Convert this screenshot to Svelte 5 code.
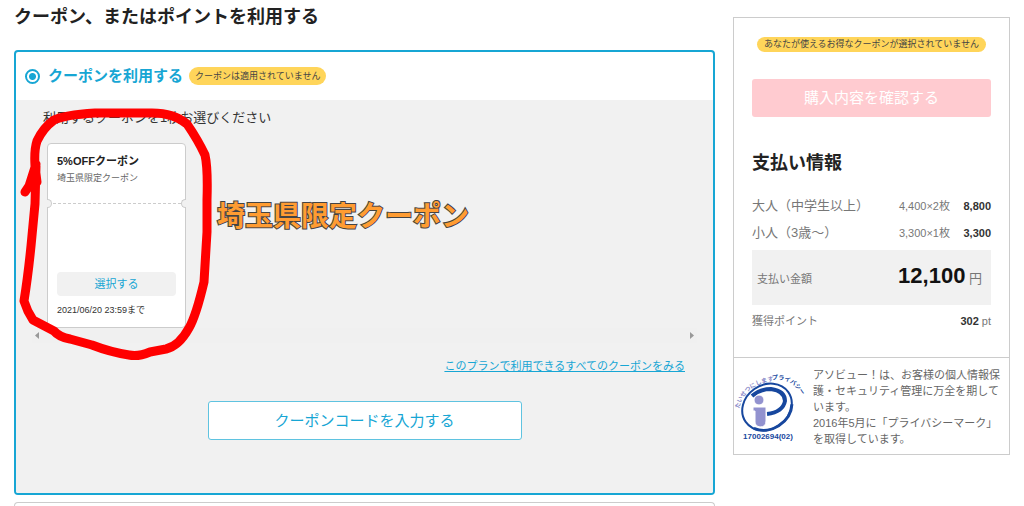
<script>
  let useCoupon = $state('coupon');

  const tickets = [
    { name: '大人（中学生以上）', count: '4,400×2枚', price: '8,800' },
    { name: '小人（3歳～）', count: '3,300×1枚', price: '3,300' }
  ];
</script>

<div class="page">
  <main>
    <h1>クーポン、またはポイントを利用する</h1>

    <section class="coupon_box">
      <div class="box_head">
        <label class="radio_label">
          <input type="radio" name="discount" value="coupon" bind:group={useCoupon} />
          <span>クーポンを利用する</span>
        </label>
        <span class="badge head_badge">クーポンは適用されていません</span>
      </div>

      <div class="box_body">
        <p class="lead">利用するクーポンを1枚お選びください</p>

        <div class="coupon_row">
          <article class="coupon">
            <div class="coupon_top">
              <h2>5%OFFクーポン</h2>
              <p>埼玉県限定クーポン</p>
            </div>
            <div class="coupon_cut"></div>
            <div class="coupon_bottom">
              <button class="select_btn" type="button">選択する</button>
              <p>2021/06/20 23:59まで</p>
            </div>
          </article>
          <strong class="callout">埼玉県限定クーポン</strong>

          <!-- 手書きの囲み -->
          <svg class="marker" width="200" height="256" viewBox="16 106 200 256" aria-hidden="true">
            <path d="M25 192 L29 186 L36 164 M37 182 L35 166 Q34 150 37 141 Q43 128 54 120 Q64 115 95 113 L120 113 L152 113 Q174 113 187 124 Q198 140 205 155 Q208 168 207 200 L207 232 L204 282 Q196 316 189 328 Q179 346 166 349 L150 352 Q138 357 129 355 Q110 352 92 345 L70 339 Q59 337 54 331 L33 320 Q27 311 24 301 Q28 276 31 246 L35 204 L36 166" />
          </svg>
        </div>

        <div class="scroll_bar" aria-hidden="true">
          <svg width="4" height="7" viewBox="0 0 4 7"><path d="M4 0V7L0 3.5Z" /></svg>
          <svg width="4" height="7" viewBox="0 0 4 7"><path d="M0 0V7L4 3.5Z" /></svg>
        </div>

        <a class="all_link" href="#coupons">このプランで利用できるすべてのクーポンをみる</a>
        <button class="code_btn" type="button">クーポンコードを入力する</button>
      </div>
    </section>

    <section class="next_box"></section>
  </main>

  <aside>
    <div class="pay">
      <span class="badge pay_badge">あなたが使えるお得なクーポンが選択されていません</span>
      <button class="confirm_btn" type="button" disabled>購入内容を確認する</button>

      <h2>支払い情報</h2>
      <table>
        <tbody>
          {#each tickets as ticket}
            <tr>
              <th>{ticket.name}</th>
              <td class="count">{ticket.count}</td>
              <td class="price">{ticket.price}</td>
            </tr>
          {/each}
        </tbody>
      </table>
      <div class="total">
        <span>支払い金額</span>
        <span class="yen"><b>12,100</b> 円</span>
      </div>
      <div class="point">
        <span>獲得ポイント</span>
        <span><b>302</b> pt</span>
      </div>
    </div>

    <div class="privacy">
      <svg width="68" height="70" viewBox="0 0 68 70" role="img" aria-label="プライバシーマーク">
        <defs>
          <path id="arc_left" d="M4 38 Q9 14 38 10" />
          <path id="arc_right" d="M37 9 Q58 6 69 28" />
        </defs>
        <text class="mark_soft"><textPath href="#arc_left">たいせつにします</textPath></text>
        <text class="mark_bold"><textPath href="#arc_right">プライバシー</textPath></text>
        <g transform="rotate(-35 32 36)">
          <ellipse cx="32" cy="36" rx="26" ry="22" fill="none" stroke="#17479e" stroke-width="2" />
          <path d="M9 46 A26 22 0 0 0 54 48" fill="none" stroke="#17479e" stroke-width="3" />
        </g>
        <path d="M17 25 Q25 18 36 18 Q50 20 50 30 Q48 41 32 43" fill="none" stroke="#17479e" stroke-width="4" />
        <circle cx="24" cy="29" r="5" fill="#9292cf" stroke="#fff" stroke-width="1" />
        <path d="M18 36 H31 V50 Q31 56 25 56 Q20 55 20 51 V40 H18Z" fill="#9292cf" stroke="#fff" stroke-width="1" />
        <text class="mark_no" x="33" y="68">17002694(02)</text>
      </svg>
      <p>アソビュー！は、お客様の個人情報保護・セキュリティ管理に万全を期しています。<br />2016年5月に「プライバシーマーク」を取得しています。</p>
    </div>
  </aside>
</div>

<style>
  :global(body) {
    margin: 0;
    background: #fff;
  }
  .page {
    display: grid;
    grid-template-columns: minmax(0, 1fr) 277px;
    align-items: start;
    gap: 18px;
    padding: 0 14px;
    color: #333;
    font-family: "Liberation Sans", "Noto Sans CJK JP", sans-serif;
  }
  h1, h2, p {
    margin: 0;
  }
  button {
    font-family: inherit;
    padding: 0;
    cursor: pointer;
  }
  h1 {
    padding: 3px 0 19px;
    font-size: 18px;
    line-height: 28px;
    color: #222;
  }
  .coupon_box {
    border: 2px solid #17a6d4;
    border-radius: 4px;
    overflow: hidden;
  }
  .box_head {
    display: flex;
    align-items: center;
    gap: 6px;
    padding: 12px 9px;
  }
  .radio_label {
    display: flex;
    align-items: center;
    gap: 8px;
    color: #17a6d4;
    font-size: 15px;
    font-weight: bold;
    line-height: 24px;
  }
  input {
    appearance: none;
    width: 15px;
    height: 15px;
    margin: 0;
    border: 2px solid #17a6d4;
    border-radius: 50%;
  }
  input:checked {
    background: radial-gradient(#17a6d4 0 3px, #fff 4px);
  }
  .badge {
    border-radius: 10px;
    background: #ffd55a;
    color: #444;
    font-size: 9px;
    text-align: center;
    white-space: nowrap;
  }
  .head_badge {
    padding: 0 6px;
    line-height: 18px;
  }
  .box_body {
    display: flex;
    flex-direction: column;
    padding: 0 16px 53px;
    background: #f1f1f1;
  }
  .lead {
    padding: 8px 0 15px 11px;
    font-size: 13px;
    line-height: 20px;
  }
  .coupon_row {
    position: relative;
    display: flex;
    align-items: flex-start;
    gap: 31px;
    padding-left: 15px;
  }
  .coupon {
    box-sizing: border-box;
    width: 139px;
    border: 1px solid #ccc;
    border-radius: 4px;
    background: #fff;
  }
  .coupon_top {
    padding: 8px 9px 13px;
  }
  .coupon h2 {
    color: #222;
    font-size: 11px;
    line-height: 18px;
  }
  .coupon_top p {
    color: #666;
    font-size: 9px;
    line-height: 16px;
  }
  .coupon_cut {
    position: relative;
    height: 9px;
    background: linear-gradient(90deg, #ccc 3px, transparent 3px) 5px 4px / 5px 1px repeat-x;
  }
  .coupon_cut::before,
  .coupon_cut::after {
    content: "";
    position: absolute;
    top: 0;
    box-sizing: border-box;
    width: 5px;
    height: 9px;
    border: 1px solid #ccc;
    background: #f1f1f1;
  }
  .coupon_cut::before {
    left: -1px;
    border-left: 0;
    border-radius: 0 5px 5px 0;
  }
  .coupon_cut::after {
    right: -1px;
    border-right: 0;
    border-radius: 5px 0 0 5px;
  }
  .coupon_bottom {
    padding: 64px 9px 9px;
  }
  .select_btn {
    display: block;
    width: 100%;
    border: 0;
    border-radius: 4px;
    background: #f1f1f1;
    color: #17a6d4;
    font-size: 11px;
    line-height: 24px;
  }
  .coupon_bottom p {
    padding-top: 6px;
    font-size: 9px;
    line-height: 16px;
    white-space: nowrap;
  }
  .callout {
    padding-top: 56px;
    color: #ff9c32;
    font-size: 28px;
    line-height: 36px;
    -webkit-text-stroke: 2px #444;
    paint-order: stroke fill;
    white-space: nowrap;
  }
  /* the scribble lies over the card and the lead text */
  .marker {
    position: absolute;
    left: -16px;
    top: -37px;
    pointer-events: none;
  }
  .marker path {
    fill: none;
    stroke: #f00;
    stroke-width: 9;
    stroke-linecap: round;
    stroke-linejoin: round;
  }
  .scroll_bar {
    display: flex;
    justify-content: space-between;
    align-items: center;
    height: 15px;
    padding: 0 3px;
    background: #f0f0f0;
  }
  .scroll_bar path {
    fill: #999;
  }
  .all_link {
    align-self: flex-end;
    margin: 15px 12px 0 0;
    color: #17a6d4;
    font-size: 11px;
    line-height: 16px;
  }
  .code_btn {
    align-self: center;
    width: 314px;
    margin-top: 27px;
    border: 1px solid #5fc3e0;
    border-radius: 3px;
    background: #fff;
    color: #17a6d4;
    font-size: 15px;
    line-height: 37px;
  }
  .next_box {
    height: 3px;
    margin-top: 7px;
    border: 1px solid #ccc;
    border-bottom: 0;
    border-radius: 4px 4px 0 0;
  }
  aside {
    box-sizing: border-box;
    margin-top: 17px;
    border: 1px solid #ccc;
  }
  .pay {
    display: flex;
    flex-direction: column;
    padding: 19px 18px 26px;
  }
  .pay_badge {
    align-self: center;
    padding: 0 7px;
    line-height: 15px;
  }
  .confirm_btn {
    margin-top: 27px;
    border: 0;
    border-radius: 3px;
    background: #ffcbd0;
    color: #fff;
    font-size: 15px;
    line-height: 38px;
  }
  .pay h2 {
    padding: 32px 0 15px;
    color: #222;
    font-size: 18px;
    line-height: 28px;
  }
  table {
    width: 100%;
    border-collapse: collapse;
    color: #777;
  }
  th, td {
    height: 27px;
    padding: 0;
    line-height: 20px;
    white-space: nowrap;
  }
  th {
    font-size: 13px;
    font-weight: normal;
    text-align: left;
  }
  td {
    font-size: 11px;
    text-align: right;
  }
  .price {
    width: 41px;
    color: #333;
    font-weight: bold;
  }
  .total {
    display: flex;
    justify-content: space-between;
    align-items: baseline;
    margin-top: 4px;
    padding: 8px 9px 8px 5px;
    background: #f1f1f1;
    color: #777;
    font-size: 11px;
    line-height: 36px;
  }
  .yen {
    font-size: 13px;
  }
  .yen b {
    color: #111;
    font-size: 22px;
  }
  .point {
    display: flex;
    justify-content: space-between;
    padding-top: 6px;
    color: #777;
    font-size: 11px;
    line-height: 20px;
  }
  .point b {
    color: #333;
  }
  .privacy {
    display: flex;
    gap: 10px;
    padding: 9px 4px 7px 1px;
    border-top: 1px solid #ccc;
    color: #666;
    font-size: 11px;
    line-height: 16px;
  }
  .privacy svg {
    flex: none;
    margin-top: 4px;
    overflow: visible;
  }
  .mark_soft {
    fill: #8585c6;
    font-size: 6px;
    font-weight: bold;
  }
  .mark_bold {
    fill: #17479e;
    font-size: 6px;
    font-weight: bold;
  }
  .mark_no {
    fill: #17479e;
    font-size: 8px;
    font-weight: bold;
    text-anchor: middle;
  }
</style>
